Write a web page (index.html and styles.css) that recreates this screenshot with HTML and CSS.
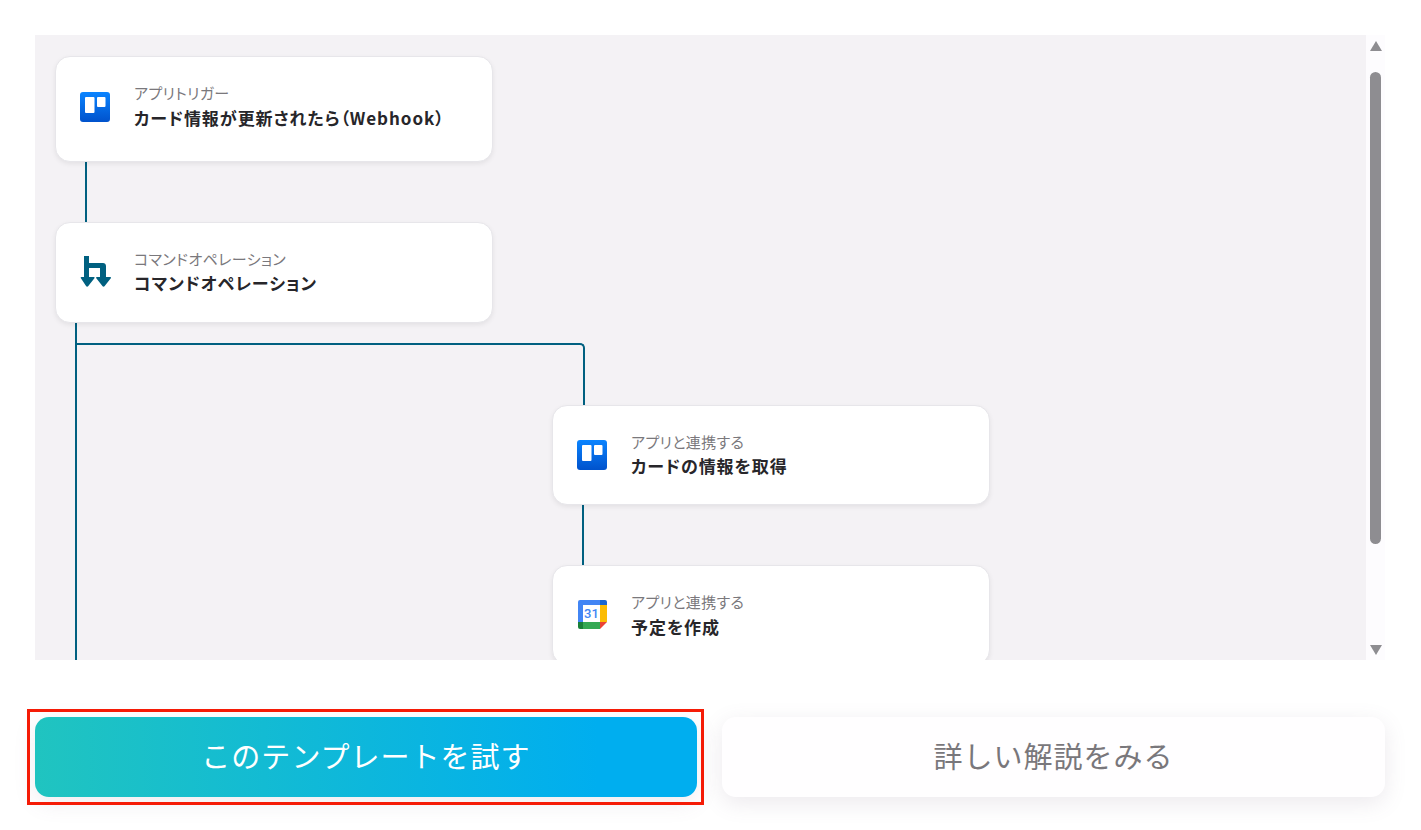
FILE: index.html
```html
<!DOCTYPE html>
<html lang="ja">
<head>
<meta charset="utf-8">
<title>テンプレート</title>
<link rel="stylesheet" href="styles.css">
</head>
<body>
<main class="page">
  <section class="viewer">
    <div class="canvas">
      <div class="line line-a"></div>
      <div class="line line-b"></div>
      <div class="line line-c"></div>
      <div class="branch"></div>
      <div class="line line-d"></div>

      <article class="node node-1">
        <svg class="icon" viewBox="0 0 30 30"><use href="#trello"/></svg>
        <div class="text"><p class="label">アプリトリガー</p><p class="title">カード情報が更新されたら（Webhook）</p></div>
      </article>

      <article class="node node-2">
        <svg class="icon" viewBox="0 0 31 31">
          <path class="cmd" d="M4 0h5v7h14c1.700 0 3 1.300 3 3v11h4.200c.8 0 1.100.8.600 1.300l-6.300 7.900c-.5.600-1.400.600-1.900 0l-6.300-7.900c-.5-.5-.2-1.300.6-1.300H20V12H9v9h4.800c.8 0 1.100.8.600 1.300l-6.300 7.900c-.5.600-1.400.600-1.900 0L.9 22.300C.4 21.800.7 21 1.500 21H4z"/>
        </svg>
        <div class="text"><p class="label">コマンドオペレーション</p><p class="title">コマンドオペレーション</p></div>
      </article>

      <article class="node node-3">
        <svg class="icon" viewBox="0 0 30 30"><use href="#trello"/></svg>
        <div class="text"><p class="label">アプリと連携する</p><p class="title">カードの情報を取得</p></div>
      </article>

      <article class="node node-4">
        <svg class="icon" viewBox="0 0 30 30">
          <path fill="#4285f4" d="M3 0h20v5H6v17H1V2a2 2 0 0 1 2-2z"/>
          <path fill="#1967d2" d="M23 0h5a2 2 0 0 1 2 2v3h-7z"/>
          <path fill="#fbbc04" d="M23 5h7v17h-7z"/>
          <path fill="#34a853" d="M6 22h17v7H6z"/>
          <path fill="#188038" d="M1 22h5v7H3a2 2 0 0 1-2-2z"/>
          <path fill="#ea4335" d="M23 22h7l-7 7z"/>
          <rect class="cal-page" x="6" y="5" width="17" height="17"/>
          <text class="cal-num" x="14.500" y="18">31</text>
        </svg>
        <div class="text"><p class="label">アプリと連携する</p><p class="title">予定を作成</p></div>
      </article>
    </div>
    <div class="scrollbar">
      <span class="arrow arrow-up"></span>
      <div class="track"><div class="thumb"></div></div>
      <span class="arrow arrow-down"></span>
    </div>
  </section>

  <div class="actions">
    <a class="btn btn-primary">このテンプレートを試す</a>
    <a class="btn btn-secondary">詳しい解説をみる</a>
  </div>
</main>

<svg class="defs" width="0" height="0">
  <defs>
    <linearGradient id="trello-grad" x1="0" y1="0" x2="0" y2="1">
      <stop offset="0" stop-color="#0a84ff"/>
      <stop offset="1" stop-color="#0052cc"/>
    </linearGradient>
    <symbol id="trello" viewBox="0 0 30 30">
      <rect width="30" height="30" rx="3" fill="url(#trello-grad)"/>
      <rect x="5" y="5" width="9.500" height="16" rx="1" fill="#fff"/>
      <rect x="17" y="5" width="8.500" height="10" rx="1" fill="#fff"/>
    </symbol>
  </defs>
</svg>
</body>
</html>
```
FILE: styles.css
```css
* { box-sizing: border-box; }
html, body { margin: 0; height: 100%; background: #fff; }
body {
  font-family: "Noto Sans CJK JP", "Noto Sans", sans-serif;
  overflow: hidden;
}
.page { padding: 35px 36px 0 35px; }
.viewer { display: flex; height: 625px; }
.canvas {
  position: relative;
  flex: 1;
  background: #f4f2f5;
  overflow: hidden;
}
.scrollbar {
  width: 19px;
  background: #fdfcfe;
  display: flex;
  flex-direction: column;
  align-items: center;
}
.track { flex: 1; width: 100%; display: flex; justify-content: center; }
.thumb {
  width: 11px;
  height: 472px;
  margin-top: 21px;
  background: #8e8d91;
  border-radius: 6px;
}
.arrow { width: 0; height: 0; border-left: 6.500px solid transparent; border-right: 6.500px solid transparent; }
.arrow-up { margin-top: 6px; border-bottom: 10px solid #8e8d91; }
.arrow-down { margin-bottom: 5px; border-top: 10px solid #8e8d91; }

.node {
  position: absolute;
  width: 438px;
  display: flex;
  align-items: center;
  gap: 24px;
  padding-left: 24px;
  background: #fff;
  border: 1px solid #e7e6ea;
  border-radius: 15px;
  box-shadow: 0 2px 5px rgba(0, 0, 0, .07);
}
.node-1 { left: 20px; top: 21px; height: 106px; padding-bottom: 4px; }
.node-2 { left: 20px; top: 187px; height: 101px; padding-bottom: 2px; }
.node-3 { left: 517px; top: 370px; height: 100px; }
.node-4 { left: 517px; top: 530px; height: 100px; }
.icon { width: 30px; height: 30px; flex: none; }
.node-2 .icon { width: 31px; height: 31px; margin-right: -1px; }
.cmd { fill: #006080; }
.cal-page { fill: #fff; }
.cal-num { font: 500 13px Roboto, "Liberation Sans", sans-serif; fill: #4285f4; text-anchor: middle; }
.text { display: flex; flex-direction: column; gap: 2px; align-self: flex-start; margin-top: 25px; }
.node-1 .text, .node-4 .text { gap: 3px; }
.label { margin: 0; font-size: 15px; line-height: 21px; letter-spacing: .025em; color: #7a787c; font-feature-settings: "palt"; }
.title { margin: 0; font-size: 17px; line-height: 24px; font-weight: 700; letter-spacing: .055em; color: #27262a; font-feature-settings: "palt"; }

.line { position: absolute; width: 2px; background: #006080; }
.line-a { left: 50px; top: 126px; height: 62px; }
.line-b { left: 40px; top: 287px; height: 338px; }
.line-c { left: 548px; top: 320px; height: 51px; }
.line-d { left: 547px; top: 469px; height: 62px; }
.branch {
  position: absolute;
  left: 42px;
  top: 308px;
  width: 508px;
  height: 14px;
  border-top: 2px solid #006080;
  border-right: 2px solid #006080;
  border-top-right-radius: 5px;
}

.actions { display: flex; gap: 25px; margin-top: 57px; }
.btn {
  position: relative;
  height: 80px;
  padding-bottom: 4px;
  display: flex;
  align-items: center;
  justify-content: center;
  font-size: 29px;
  letter-spacing: .035em;
  border-radius: 14px;
}
.btn-primary {
  flex: 0 0 662px;
  color: #fff;
  background: linear-gradient(90deg, #20c4c0 0%, #00aeef 85%);
  box-shadow: 0 6px 22px rgba(120, 100, 130, .12);
}
.btn-primary::after {
  content: "";
  position: absolute;
  inset: -8px -7px -8px -8px;
  border: 3px solid #f51b06;
}
.btn-secondary {
  flex: 1;
  color: #79777b;
  background: #fffeff;
  box-shadow: 0 6px 22px rgba(120, 100, 130, .14);
}
.defs { position: absolute; }
```
